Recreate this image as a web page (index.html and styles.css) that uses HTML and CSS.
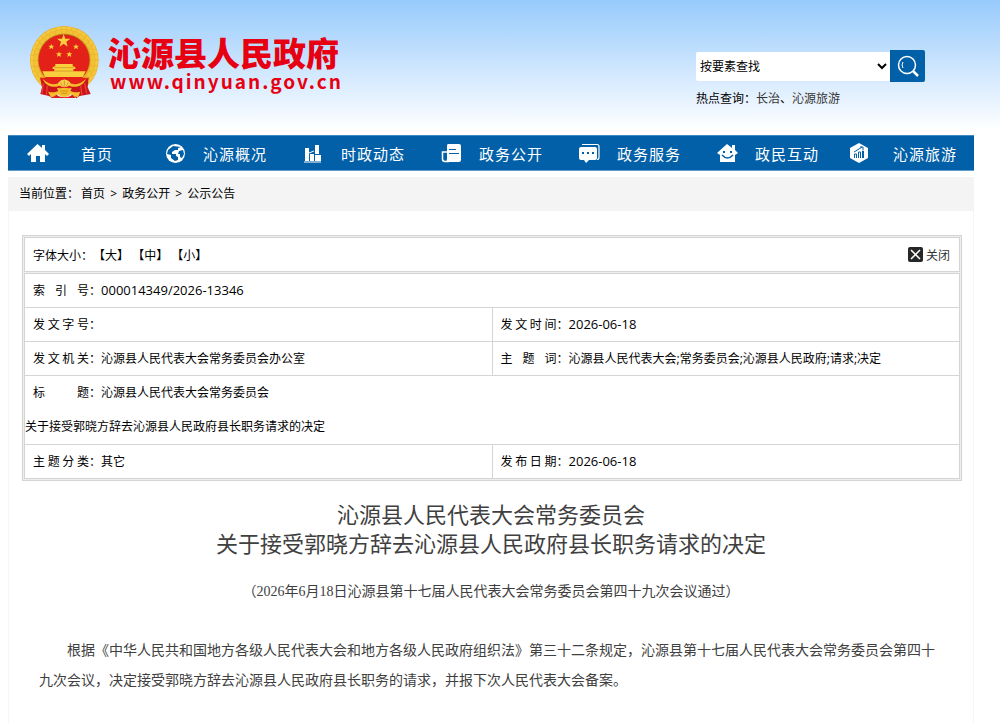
FILE: index.html
```
<!DOCTYPE html>
<html lang="zh-CN">
<head>
    <meta charset="UTF-8">
    <meta name="viewport" content="width=device-width, initial-scale=1.0">
    <title>沁源县人民政府</title>
    <link rel="stylesheet" href="styles.css">
</head>

<body>
<div class="wrap">
    <header class="header">
        <a class="logo" href="#">
            <svg class="emblem" viewBox="27 30 213 222" aria-hidden="true">
                <circle cx="133" cy="136" r="103" fill="#e8b021"/>
                <circle cx="133" cy="136" r="97" fill="none" stroke="#f5c842" stroke-width="8" stroke-dasharray="14 2"/>
                <circle cx="133" cy="136" r="86" fill="none" stroke="#f1c137" stroke-width="11" stroke-dasharray="16 2"/>
                <circle cx="132" cy="134" r="78" fill="#b8761c"/>
                <circle cx="132" cy="135" r="76" fill="#e32119"/>
                <g fill="#f8cf3c">
                    <path d="M131 57l5 14h15l-12 9 4 15-12-9-12 9 4-15-12-9h15z"/>
                    <path d="M94 86l2 6h7l-5 4 2 7-6-4-6 4 2-7-5-4h7z"/>
                    <path d="M168 86l2 6h7l-5 4 2 7-6-4-6 4 2-7-5-4h7z"/>
                    <path d="M117 109l2 6h7l-5 4 2 7-6-4-6 4 2-7-5-4h7z"/>
                    <path d="M148 109l2 6h7l-5 4 2 7-6-4-6 4 2-7-5-4h7z"/>
                    <path d="M106 147h52v6l8 4v5h-6v7h37l-8 17H75l-8-17h36v-7h-5v-5l8-4z"/>
                </g>
                <path d="M103 158h58M104 168h56" stroke="#c98a1c" stroke-width="2"/>
                <path d="M62 188h142c-8 22-30 32-71 32s-63-10-71-32z" fill="#e32119"/>
                <path d="M60 187c18 20 34 25 60 22l-9 12 6 9-20 20-10-7-26-6 5-20z" fill="#c9151b"/>
                <path d="M206 187c-18 20-34 25-60 22l9 12-6 9 20 20 10-7 33-6-9-20z" fill="#c9151b"/>
                <path d="M70 205l-4 30M82 212l-3 28M194 205l6 30M182 212l4 28" stroke="#ef3e2e" stroke-width="4"/>
                <path d="M68 192c18 17 38 20 52 10l13-9 13 9c14 10 34 7 52-10-8 20-31 29-50 20l-15-6-15 6c-19 9-42 0-50-20z" fill="#f4bd2c"/>
                <path d="M114 207c2-8 8-13 19-13s17 5 19 13l-10 8h-18z" fill="#f8cf4c"/>
                <path d="M84 230c14 3 22 2 31-3 2-6 10-9 18-9s16 3 18 9c9 5 17 6 30 3l-7 17c-9-2-16-5-22-10-8 12-30 12-38 0-6 5-12 8-21 10z" fill="#f4bd2c"/>
                <path d="M121 203l6 9M133 197v15M145 203l-6 9M121 228h24M124 235h18" stroke="#bf7b17" stroke-width="2"/>
                <path d="M97 249h70l-10-10c-12 10-36 10-48 0z" fill="#dc1c1c"/>
            </svg>
            <span class="logo-text">
                <strong>沁源县人民政府</strong>
                <em>www.qinyuan.gov.cn</em>
            </span>
        </a>
        <div class="search">
            <form class="search-box">
                <select aria-label="按要素查找">
                    <option>按要素查找</option>
                </select>
                <button type="button" aria-label="搜索">
                    <svg width="22" height="22" viewBox="0 0 22 22" fill="none" stroke="#fff" stroke-width="2">
                        <circle cx="10" cy="10" r="8.5" stroke-width="1.5"/>
                        <path d="M16 16l5 5" stroke-width="2.5"/>
                        <path d="M6 7q-2 3 0 6" stroke-width="1"/>
                    </svg>
                </button>
            </form>
            <p>热点查询：<a href="#">长治</a>、<a href="#">沁源旅游</a></p>
        </div>
    </header>

    <nav class="nav">
        <a href="#">
            <svg viewBox="0 0 34 22"><path fill="#fff" d="M17.500 2L7 12l2 2 2-2v8h5v-6h4v6h5v-8l2 2 2-2-4-4V3h-3v3z"/></svg>
            <span>首页</span>
        </a>
        <a href="#">
            <svg viewBox="0 0 34 22">
                <circle cx="17.500" cy="11.500" r="9.500" fill="#fff"/>
                <path fill="#0260a8" d="M15 4l-5 4-1 4 4 1v3l4 3 3-1v-3l-2-1v-2h-4v-2l3-2h3V6l3-1zM21 9l4-1 1 4-2 4-2-1v-3h-2z"/>
            </svg>
            <span>沁源概况</span>
        </a>
        <a href="#">
            <svg viewBox="0 0 34 22"><path fill="#fff" d="M9 6h4v13H9zM14 12h4v7h-4zM19 3h4v9h-4zM19 13h6v6h-6z"/><path stroke="#fff" d="M8 20h17M13 11l5-2"/></svg>
            <span>时政动态</span>
        </a>
        <a href="#">
            <svg viewBox="0 0 34 22">
                <path fill="#fff" d="M14 2h11q2 0 2 2v14q0 2-2 2H11q2-1 2-3V4q0-2 1-2z"/>
                <path fill="none" stroke="#fff" stroke-width="1.5" d="M13 10H8.500v7q0 2.500 2.500 2.500h4"/>
                <path stroke="#0260a8" stroke-width="1.200" d="M15 7.500h7M15 11.500h10"/>
            </svg>
            <span>政务公开</span>
        </a>
        <a href="#">
            <svg viewBox="0 0 34 22">
                <path fill="none" stroke="#fff" stroke-width="1.200" d="M10 2.500h15q2 0 2 2v11q0 2-2 2"/>
                <path fill="#fff" d="M9 5h14q2 0 2 2v9q0 2-2 2h-6l-3 3-2-3H9q-2 0-2-2V7q0-2 2-2z"/>
                <path fill="#0260a8" d="M10 10h2v2h-2zM15 10h2v2h-2zM20 10h2v2h-2z"/>
            </svg>
            <span>政务服务</span>
        </a>
        <a href="#">
            <svg viewBox="0 0 34 22">
                <path fill="#fff" d="M17 2l5 4V3h3v5l3 3-3 2v7H10v-7l-3-2z"/>
                <path fill="#0260a8" d="M13 9h2v2h-2zM20 9h2v2h-2z"/>
                <path fill="none" stroke="#0260a8" stroke-width="1.500" d="M12 13q5.500 6 11 0"/>
            </svg>
            <span>政民互动</span>
        </a>
        <a href="#">
            <svg viewBox="0 0 34 22">
                <path fill="#fff" d="M11 1l9 5v10l-9 5-9-5V6z"/>
                <path fill="none" stroke="#0260a8" d="M6.500 16v-4h2v4M10.500 16v-6h2v6M14.500 16V9h1v7M6 10l5-3 3-2M12 5h3v3"/>
            </svg>
            <span>沁源旅游</span>
        </a>
    </nav>

    <div class="crumbs">当前位置：<a href="#">首页</a> &gt; <a href="#">政务公开</a> &gt; <a href="#">公示公告</a></div>

    <main class="content">
        <div class="info">
            <div class="tools">
                <div>字体大小：<button type="button">【大】</button> <button type="button">【中】</button> <button type="button">【小】</button></div>
                <button type="button" class="close">
                    <svg width="15" height="15" viewBox="0 0 15 15"><rect width="15" height="15" rx="2" fill="#262626"/><path d="M3 3l9 9M12 3l-9 9" stroke="#fff" stroke-width="1.5"/></svg>
                    关闭
                </button>
            </div>
            <table>
                <tr>
                    <td colspan="2"><span class="label">索引号</span>：<span class="num">000014349/2026-13346</span></td>
                </tr>
                <tr>
                    <td><span class="label">发文字号</span>：</td>
                    <td><span class="label">发文时间</span>：<span class="num">2026-06-18</span></td>
                </tr>
                <tr>
                    <td><span class="label">发文机关</span>：沁源县人民代表大会常务委员会办公室</td>
                    <td><span class="label">主题词</span>：沁源县人民代表大会;常务委员会;沁源县人民政府;请求;决定</td>
                </tr>
                <tr>
                    <td colspan="2" class="name"><span class="label">标题</span>：沁源县人民代表大会常务委员会<br>关于接受郭晓方辞去沁源县人民政府县长职务请求的决定</td>
                </tr>
                <tr>
                    <td><span class="label">主题分类</span>：其它</td>
                    <td><span class="label">发布日期</span>：<span class="num">2026-06-18</span></td>
                </tr>
            </table>
        </div>

        <article class="article">
            <h1>沁源县人民代表大会常务委员会<br>关于接受郭晓方辞去沁源县人民政府县长职务请求的决定</h1>
            <p class="passed">（2026年6月18日沁源县第十七届人民代表大会常务委员会第四十九次会议通过）</p>
            <p>根据《中华人民共和国地方各级人民代表大会和地方各级人民政府组织法》第三十二条规定，沁源县第十七届人民代表大会常务委员会第四十九次会议，决定接受郭晓方辞去沁源县人民政府县长职务的请求，并报下次人民代表大会备案。</p>
        </article>
    </main>
</div>
</body>
</html>
```
FILE: styles.css
```
* {
    margin: 0;
    padding: 0;
    box-sizing: border-box;
}

body {
    font-family: "Open Sans", "Noto Sans CJK SC", sans-serif;
    font-size: 12px;
    color: #000;
    background: #fff linear-gradient(#97cafc, #fff) no-repeat 0 0 / 100% 130px;
    min-height: 100vh;
}

a {
    color: inherit;
    text-decoration: none;
}

button {
    font: inherit;
    color: inherit;
    background: none;
    border: none;
    cursor: pointer;
}

.wrap {
    display: flex;
    flex-direction: column;
    min-height: 100vh;
    margin: 0 26px 0 8px;
}

/* header */
.header {
    display: flex;
    justify-content: space-between;
    align-items: flex-start;
    height: 135px;
    padding: 25px 49px 0 21px;
}

.logo {
    display: flex;
    gap: 8px;
    color: #e60012;
}

.emblem {
    width: 71px;
    height: 74px;
}

.logo-text {
    display: flex;
    flex-direction: column;
    padding-top: 8px;
    font-family: "Noto Sans CJK SC", sans-serif;
    font-weight: 700;
}

.logo-text strong {
    font-size: 33px;
    line-height: 38px;
}

.logo-text em {
    padding-left: 2px;
    font-size: 19px;
    font-style: normal;
    line-height: 20px;
    letter-spacing: 2px;
}

.search {
    width: 229px;
    padding-top: 25px;
}

.search-box {
    display: flex;
    align-items: center;
}

.search-box select {
    flex: 1;
    height: 29px;
    border: none;
    border-radius: 2px 0 0 2px;
    background: #fff;
    font: inherit;
    color: #000;
}

.search-box button {
    display: flex;
    justify-content: center;
    align-items: center;
    width: 35px;
    height: 32px;
    border-radius: 0 2px 2px 0;
    background: #0260a8;
}

.search p {
    margin-top: 8px;
    line-height: 18px;
}

.search p a {
    color: #333;
}

/* navigation */
.nav {
    display: grid;
    grid-template-columns: repeat(7, 1fr);
    height: 36px;
    background: #0260a8;
    border-top: 1px solid #3f8ac2;
    border-bottom: 1px solid #5c9bcb;
}

.nav a {
    display: flex;
    align-items: center;
    padding: 0 6px 0 12px;
    color: #fff;
    font-size: 15px;
    letter-spacing: 1px;
}

.nav svg {
    width: 34px;
    height: 22px;
}

.nav span {
    flex: 1;
    text-align: center;
}

.crumbs {
    margin-top: 6px;
    padding: 0 11px;
    line-height: 34px;
    background: #f4f4f4;
}

.crumbs a {
    margin: 0 2px;
}

/* content */
.content {
    flex: 1;
    padding: 24px 11px 0 13px;
    border: 1px solid #f5f5f5;
    border-top: none;
}

.info {
    display: flex;
    flex-direction: column;
    gap: 1px;
    padding: 1px;
    background: #eee;
    border: 1px solid #d4d4d4;
}

.tools {
    display: flex;
    justify-content: space-between;
    align-items: center;
    height: 35px;
    padding: 0 9px 0 8px;
    background: #fff;
    border: 1px solid #d4d4d4;
}

.close {
    display: flex;
    align-items: center;
    gap: 3px;
    color: #333;
}

.info table {
    width: 100%;
    background: #fff;
    border-collapse: collapse;
    table-layout: fixed;
}

.info td {
    line-height: 33px;
    border: 1px solid #d4d4d4;
}

.info .name {
    line-height: 34px;
}

.label {
    display: inline-block;
    width: 56px;
    margin-left: 8px;
    text-align-last: justify;
}

.num {
    font-size: 13px;
    line-height: 1;
}

.article {
    padding: 19px 19px 40px 17px;
    color: #404040;
}

.article h1 {
    font-size: 22px;
    font-weight: 400;
    line-height: 29px;
    text-align: center;
}

.article p {
    margin-top: 29px;
    font-family: "Liberation Serif", "Noto Sans CJK SC", sans-serif;
    font-size: 14px;
    line-height: 30px;
    text-indent: 2em;
}

.article .passed {
    margin-top: 19px;
    text-align: center;
    text-indent: 0;
}
```
